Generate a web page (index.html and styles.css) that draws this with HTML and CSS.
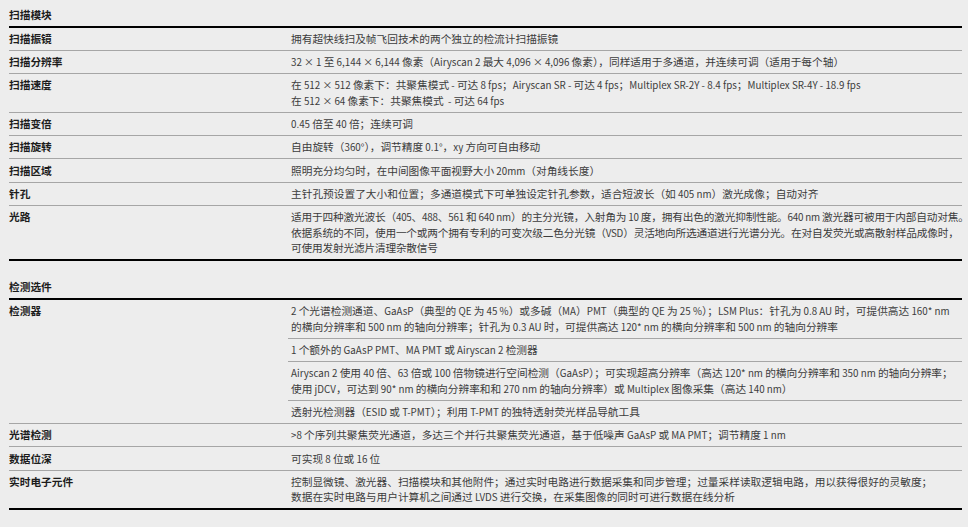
FILE: index.html
```html
<!DOCTYPE html>
<html lang="zh-CN">
<head>
<meta charset="utf-8">
<title>技术参数</title>
<link rel="stylesheet" href="styles.css">
</head>
<body>
<main class="spec">
  <section class="group">
    <h2 class="group-title">扫描模块</h2>
    <div class="rows">
      <div class="row"><div class="label">扫描振镜</div><div class="value">拥有超快线扫及帧飞回技术的两个独立的检流计扫描振镜</div></div>
      <div class="row"><div class="label">扫描分辨率</div><div class="value"><span class="lt">32 × 1 </span>至<span class="lt"> 6,144 × 6,144 </span>像素（<span class="lt">Airyscan 2 </span>最大<span class="lt"> 4,096 × 4,096 </span>像素），同样适用于多通道，并连续可调（适用于每个轴）</div></div>
      <div class="row"><div class="label">扫描速度</div><div class="value">在<span class="lt"> 512 × 512 </span>像素下：共聚焦模式<span class="lt"> - </span>可达<span class="lt"> 8 fps</span>；<span class="lt">Airyscan SR - </span>可达<span class="lt"> 4 fps</span>；<span class="lt">Multiplex SR-2Y - 8.4 fps</span>；<span class="lt">Multiplex SR-4Y - 18.9 fps</span><br>在<span class="lt"> 512 × 64 </span>像素下：共聚焦模式<span class="lt">&nbsp; - </span>可达<span class="lt"> 64 fps</span></div></div>
      <div class="row"><div class="label">扫描变倍</div><div class="value"><span class="lt">0.45 </span>倍至<span class="lt"> 40 </span>倍；连续可调</div></div>
      <div class="row"><div class="label">扫描旋转</div><div class="value">自由旋转（<span class="lt">360°</span>），调节精度<span class="lt"> 0.1°</span>，<span class="lt">xy </span>方向可自由移动</div></div>
      <div class="row"><div class="label">扫描区域</div><div class="value">照明充分均匀时，在中间图像平面视野大小<span class="lt"> 20mm</span>（对角线长度）</div></div>
      <div class="row"><div class="label">针孔</div><div class="value">主针孔预设置了大小和位置；多通道模式下可单独设定针孔参数，适合短波长（如<span class="lt"> 405 nm</span>）激光成像；自动对齐</div></div>
      <div class="row"><div class="label">光路</div><div class="value value-tight">适用于四种激光波长（<span class="lt">405</span>、<span class="lt">488</span>、<span class="lt">561 </span>和<span class="lt"> 640 nm</span>）的主分光镜，入射角为<span class="lt"> 10 </span>度，拥有出色的激光抑制性能。<span class="lt">640 nm </span>激光器可被用于内部自动对焦。<br>依据系统的不同，使用一个或两个拥有专利的可变次级二色分光镜（<span class="lt">VSD</span>）灵活地向所选通道进行光谱分光。在对自发荧光或高散射样品成像时，<br>可使用发射光滤片清理杂散信号</div></div>
    </div>
  </section>

  <section class="group">
    <h2 class="group-title">检测选件</h2>
    <div class="rows">
      <div class="row">
        <div class="label">检测器</div>
        <div class="value value-stack">
          <div class="sub"><span class="lt">2 </span>个光谱检测通道、<span class="lt">GaAsP</span>（典型的<span class="lt"> QE </span>为<span class="lt"> 45 %</span>）或多碱（<span class="lt">MA</span>）<span class="lt">PMT</span>（典型的<span class="lt"> QE </span>为<span class="lt"> 25 %</span>）；<span class="lt">LSM Plus</span>：针孔为<span class="lt"> 0.8 AU </span>时，可提供高达<span class="lt"> 160* nm</span><br>的横向分辨率和<span class="lt"> 500 nm </span>的轴向分辨率；针孔为<span class="lt"> 0.3 AU </span>时，可提供高达<span class="lt"> 120* nm </span>的横向分辨率和<span class="lt"> 500 nm </span>的轴向分辨率</div>
          <div class="sub"><span class="lt">1 </span>个额外的<span class="lt"> GaAsP PMT</span>、<span class="lt">MA PMT </span>或<span class="lt"> Airyscan 2 </span>检测器</div>
          <div class="sub"><span class="lt">Airyscan 2 </span>使用<span class="lt"> 40 </span>倍、<span class="lt">63 </span>倍或<span class="lt"> 100 </span>倍物镜进行空间检测（<span class="lt">GaAsP</span>）；可实现超高分辨率（高达<span class="lt"> 120* nm </span>的横向分辨率和<span class="lt"> 350 nm </span>的轴向分辨率；<br>使用<span class="lt"> jDCV</span>，可达到<span class="lt"> 90* nm </span>的横向分辨率和和<span class="lt"> 270 nm </span>的轴向分辨率）或<span class="lt"> Multiplex </span>图像采集（高达<span class="lt"> 140 nm</span>）</div>
          <div class="sub">透射光检测器（<span class="lt">ESID </span>或<span class="lt"> T-PMT</span>）；利用<span class="lt"> T-PMT </span>的独特透射荧光样品导航工具</div>
        </div>
      </div>
      <div class="row"><div class="label">光谱检测</div><div class="value"><span class="lt">&gt;8 </span>个序列共聚焦荧光通道，多达三个并行共聚焦荧光通道，基于低噪声<span class="lt"> GaAsP </span>或<span class="lt"> MA PMT</span>；调节精度<span class="lt"> 1 nm</span></div></div>
      <div class="row"><div class="label">数据位深</div><div class="value">可实现<span class="lt"> 8 </span>位或<span class="lt"> 16 </span>位</div></div>
      <div class="row"><div class="label">实时电子元件</div><div class="value">控制显微镜、激光器、扫描模块和其他附件；通过实时电路进行数据采集和同步管理；过量采样读取逻辑电路，用以获得很好的灵敏度；<br>数据在实时电路与用户计算机之间通过<span class="lt"> LVDS </span>进行交换，在采集图像的同时可进行数据在线分析</div></div>
    </div>
  </section>
</main>
</body>
</html>
```

FILE: styles.css
```css
* {
  box-sizing: border-box;
}

html,
body {
  margin: 0;
  background: #ededed;
}

body {
  font-family: "Noto Sans CJK SC", "Noto Sans", sans-serif;
  font-size: 10.7px;
  line-height: 15.5px;
  color: #3c3c3c;
}

.spec {
  width: 962px;
  padding: 6.5px 0 0 9px;
}

.group + .group {
  margin-top: 18px;
}

.group-title {
  margin: 0;
  padding: 0 0 3.5px;
  font-size: inherit;
  line-height: inherit;
  font-weight: 700;
  color: #1c1c1c;
  border-bottom: 2px solid #000;
}

.rows {
  border-bottom: 2px solid #000;
}

.row {
  display: grid;
  grid-template-columns: 279px 1fr;
  border-bottom: 1px solid #a6a6a6;
}

.row:last-child {
  border-bottom: none;
}

.label {
  padding: 3.25px 0 3.5px;
  font-weight: 700;
  color: #1c1c1c;
  white-space: nowrap;
}

.value {
  padding: 3.25px 0 3.5px 3px;
  white-space: nowrap;
}

.value-tight {
  letter-spacing: -0.2px;
}

.lt {
  font-size: 9.8px;
  line-height: 1;
}

.value-stack {
  padding: 0;
  display: flex;
  flex-direction: column;
}

.sub {
  padding: 3.25px 0 3.5px 3px;
  border-bottom: 1px solid #a6a6a6;
}

.sub:last-child {
  border-bottom: none;
}
```
